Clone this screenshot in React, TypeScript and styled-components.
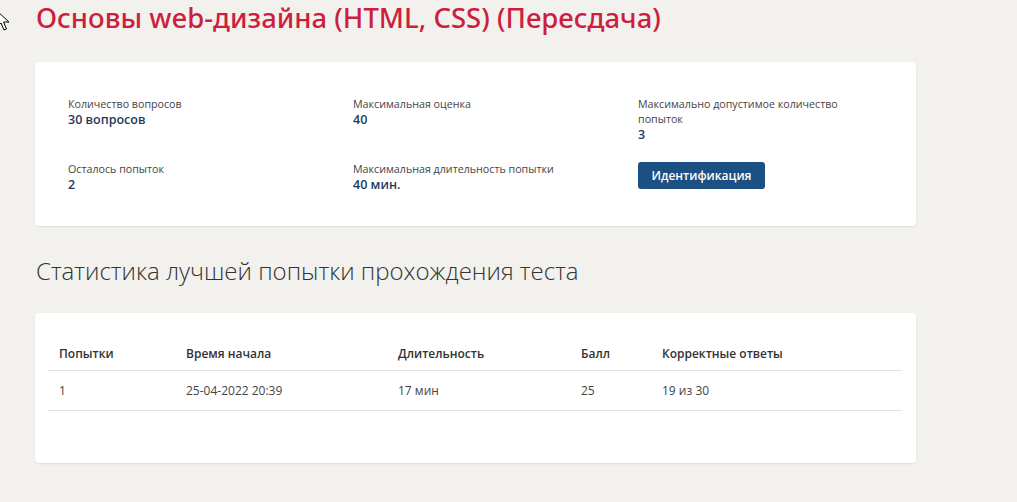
import React from 'react';
import styled, {createGlobalStyle} from "styled-components";

const GlobalStyle = createGlobalStyle`
  body {
    margin: 0;
    background: #f2f1ee;
    font-family: "Open Sans", "Noto Sans", sans-serif;
    color: #333;
  }
`

type Info = { label: string; value?: string };

const infoRows: Info[] = [
    {label: "Количество вопросов", value: "30 вопросов"},
    {label: "Максимальная оценка", value: "40"},
    {label: "Максимально допустимое количество попыток", value: "3"},
    {label: "Осталось попыток", value: "2"},
    {label: "Максимальная длительность попытки", value: "40 мин."},
];

const columns = ["Попытки", "Время начала", "Длительность", "Балл", "Корректные ответы"];
const widths = [127, 212, 183, 81, undefined];
const attempts = [["1", "25-04-2022 20:39", "17 мин", "25", "19 из 30"]];

const Cursor = () => (
    <StyledCursor width="14" height="22" viewBox="0 0 14 22">
        <path d="M1 1 L1 17 L5 13 L8 20 L10.5 19 L7.5 12 L13 12 Z" fill="#fff" stroke="#000" strokeWidth="1"/>
    </StyledCursor>
);

export default function App() {
    return (
        <>
            <GlobalStyle/>
            <StyledPage>
                <Cursor/>
                <StyledTitle>Основы web-дизайна (HTML, CSS) (Пересдача)</StyledTitle>
                <Card>
                    <InfoGrid>
                        {infoRows.map((item) => (
                            <InfoItem key={item.label}>
                                <InfoLabel>{item.label}</InfoLabel>
                                <InfoValue>{item.value}</InfoValue>
                            </InfoItem>
                        ))}
                        <InfoItem>
                            <Button>Идентификация</Button>
                        </InfoItem>
                    </InfoGrid>
                </Card>
                <SectionTitle>Статистика лучшей попытки прохождения теста</SectionTitle>
                <TableCard>
                    <Table>
                        <thead>
                        <tr>
                            {columns.map((c, i) => (
                                <HeadCell key={c} style={{width: widths[i]}}>{c}</HeadCell>
                            ))}
                        </tr>
                        </thead>
                        <tbody>
                        {attempts.map((row) => (
                            <tr key={row[0]}>
                                {row.map((cell, i) => <Cell key={i}>{cell}</Cell>)}
                            </tr>
                        ))}
                        </tbody>
                    </Table>
                </TableCard>
            </StyledPage>
        </>
    );
}

const StyledPage = styled.main`
  position: relative;
  padding: 1px 35px 40px;
  width: 881px;
`

const StyledCursor = styled.svg`
  position: absolute;
  left: -4px;
  top: 10px;
`

const StyledTitle = styled.h1`
  margin: 0 0 27px 1px;
  font-family: "Noto Sans", sans-serif;
  font-size: 27.5px;
  line-height: 34px;
  font-weight: 500;
  color: #cd1f3d;
`

const Card = styled.section`
  background: #fff;
  border-radius: 4px;
  box-shadow: 0 1px 2px rgba(0, 0, 0, 0.08);
  padding: 35px 33px 33px;
`

const InfoGrid = styled.div`
  display: grid;
  grid-template-columns: 285px 285px 210px;
  row-gap: 19px;
`

const InfoItem = styled.div`
  display: flex;
  flex-direction: column;
  align-items: flex-start;
`

const InfoLabel = styled.span`
  font-size: 10.7px;
  line-height: 15px;
  color: #444;
`

const InfoValue = styled.span`
  font-size: 12.5px;
  line-height: 16px;
  font-weight: 600;
  color: #1d3a5c;
`

const Button = styled.button`
  height: 27px;
  padding: 0 13.5px;
  border: none;
  border-radius: 3px;
  background: #1c5082;
  color: #fff;
  font-family: "Open Sans", sans-serif;
  font-size: 12px;
  font-weight: 600;
  cursor: pointer;
`

const SectionTitle = styled.h2`
  margin: 30px 0 27px 1px;
  font-size: 24px;
  line-height: 30px;
  font-weight: 300;
  color: #333;
`

const TableCard = styled(Card)`
  padding: 20px 14px 52px 13px;
`

const Table = styled.table`
  width: 100%;
  table-layout: fixed;
  border-collapse: collapse;
  font-size: 12px;
  line-height: 17px;
  text-align: left;
`

const HeadCell = styled.th`
  box-sizing: border-box;
  padding: 12px 11px 8px;
  font-weight: 600;
  color: #333;
  border-bottom: 1px solid #e2e2e2;
`

const Cell = styled.td`
  padding: 11px 11px;
  color: #444;
  border-bottom: 1px solid #e2e2e2;
`
